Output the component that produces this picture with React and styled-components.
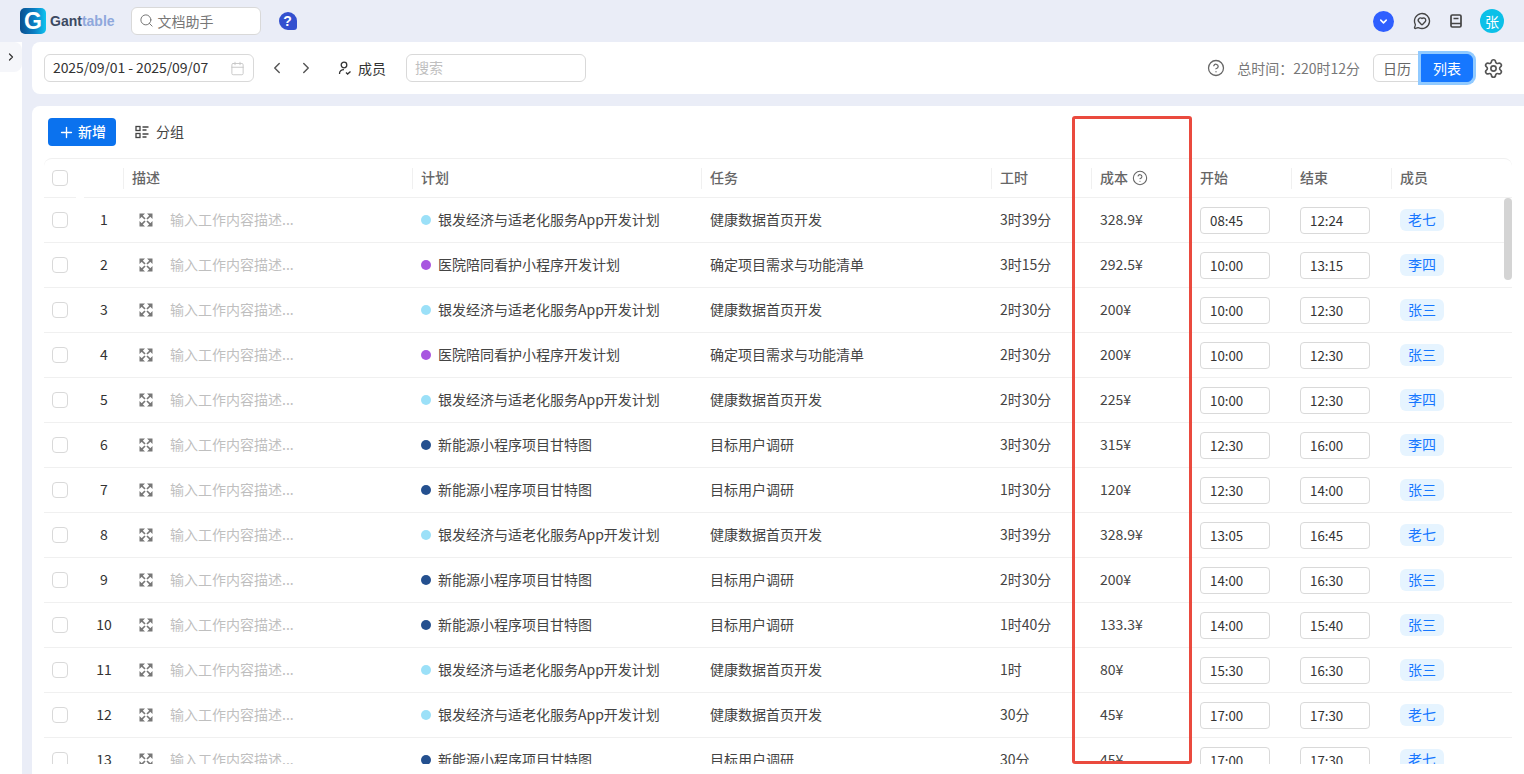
import React from "react";
import styled, { createGlobalStyle } from "styled-components";
import {
  Calendar,
  ChevronDown,
  ChevronLeft,
  ChevronRight,
  CircleHelp,
  MessageCircleHeart,
  Plus,
  Search,
  Settings,
} from "lucide-react";

const GlobalStyle = createGlobalStyle`
  html, body {
    margin: 0;
    height: 100%;
    overflow: hidden;
    background: #eaedf7;
    font-family: "Noto Sans CJK SC", "Noto Sans", sans-serif;
    font-size: 14px;
    color: #444;
  }
`;

const Page = styled.div`
  position: relative;
  width: 1524px;
  height: 774px;
  display: flex;
  flex-direction: column;
  overflow: hidden;
`;

const TopBar = styled.header`
  height: 42px;
  flex: none;
  display: flex;
  align-items: center;
  padding: 0 20px;
`;

const LogoMark = styled.div`
  width: 26px;
  height: 26px;
  border-radius: 5px;
  background: linear-gradient(90deg, #0a4f8f 0%, #0b7fc4 55%, #10c4f0 100%);
  color: #fff;
  font-family: "Liberation Sans", sans-serif;
  font-size: 23px;
  font-weight: 700;
  line-height: 27px;
  text-align: center;
`;

const LogoText = styled.div`
  margin-left: 4px;
  font-family: "Liberation Sans", sans-serif;
  font-size: 14px;
  font-weight: 700;
  color: #3c4a63;
  span {
    color: #8fa8dc;
  }
`;

const DocSearch = styled.div`
  margin-left: 16px;
  width: 130px;
  height: 28px;
  box-sizing: border-box;
  display: flex;
  align-items: center;
  gap: 4px;
  padding: 0 0 1px 7px;
  background: #fff;
  border: 1px solid #d9d9d9;
  border-radius: 6px;
  color: #777;
`;

const HelpBubble = styled.div`
  margin-left: 18px;
  width: 18px;
  height: 18px;
  border-radius: 50% 50% 3px 50%;
  background: #3350cf;
  color: #fff;
  font-family: "Liberation Sans", sans-serif;
  font-size: 14px;
  font-weight: 700;
  line-height: 18px;
  text-align: center;
`;

const TopActions = styled.div`
  margin-left: auto;
  display: flex;
  align-items: center;
  gap: 19px;
`;

const Round = styled.div`
  width: ${(p) => p.$size}px;
  height: ${(p) => p.$size}px;
  margin-left: ${(p) => p.$ml || 0}px;
  border-radius: 50%;
  background: ${(p) => p.$bg};
  color: #fff;
  display: flex;
  align-items: center;
  justify-content: center;
`;

const Body = styled.div`
  flex: 1;
  min-height: 0;
  display: flex;
`;

const Side = styled.aside`
  width: 22px;
  flex: none;
  background: #fff;
  margin-right: 10px;
`;

const SideToggle = styled.div`
  height: 30px;
  background: #f5f6fa;
  border-radius: 0 8px 8px 0;
  display: flex;
  align-items: center;
  justify-content: center;
  color: #333;
`;

const Main = styled.main`
  flex: 1;
  min-width: 0;
  display: flex;
  flex-direction: column;
  gap: 12px;
`;

const Toolbar = styled.section`
  height: 52px;
  flex: none;
  box-sizing: border-box;
  background: #fff;
  border-radius: 8px 0 0 8px;
  display: flex;
  align-items: center;
  padding: 0 20px 0 12px;
`;

const Field = styled.div`
  height: 28px;
  box-sizing: border-box;
  width: ${(p) => p.$w}px;
  margin-left: ${(p) => p.$ml || 0}px;
  display: flex;
  align-items: center;
  justify-content: space-between;
  padding: 0 8px 2px;
  border: 1px solid #d9d9d9;
  border-radius: 6px;
  letter-spacing: ${(p) => (p.$muted ? "0" : "-0.1px")};
  color: ${(p) => (p.$muted ? "#bfbfbf" : "#333")};
  svg {
    margin-top: 2px;
  }
`;

const IconBtn = styled.div`
  display: flex;
  align-items: center;
  margin-left: ${(p) => p.$ml || 0}px;
  color: #555;
`;

const MemberBtn = styled.div`
  margin-left: 23px;
  display: flex;
  align-items: center;
  gap: 6px;
  color: #333;
`;

const Total = styled.div`
  margin-left: auto;
  display: flex;
  align-items: center;
  gap: 12px;
  color: #777;
  svg {
    color: #666;
  }
`;

const Segments = styled.div`
  margin-left: 13px;
  display: flex;
`;

const Segment = styled.div`
  width: ${(p) => (p.$active ? 52 : 48)}px;
  height: 28px;
  box-sizing: border-box;
  display: flex;
  align-items: center;
  justify-content: center;
  padding-bottom: 1px;
  border: 1px solid ${(p) => (p.$active ? "#1677ff" : "#d9d9d9")};
  border-radius: ${(p) => (p.$active ? "0 6px 6px 0" : "6px 0 0 6px")};
  background: ${(p) => (p.$active ? "#1677ff" : "#fff")};
  color: ${(p) => (p.$active ? "#fff" : "#666")};
  box-shadow: ${(p) => (p.$active ? "0 0 0 3px #91caff" : "none")};
  position: relative;
`;

const GearBtn = styled.div`
  margin-left: 10px;
  display: flex;
  color: #555;
`;

const Card = styled.section`
  flex: 1;
  min-height: 0;
  background: #fff;
  border-radius: 8px 0 0 0;
  padding: 12px;
  padding-bottom: 10px;
  display: flex;
  flex-direction: column;
`;

const Actions = styled.div`
  height: 28px;
  flex: none;
  display: flex;
  align-items: center;
  margin: 0 0 12px 4px;
`;

const PrimaryBtn = styled.div`
  width: 68px;
  height: 28px;
  box-sizing: border-box;
  display: flex;
  align-items: center;
  justify-content: center;
  gap: 3px;
  padding-bottom: 2px;
  background: #0b72ee;
  border-radius: 4px;
  color: #fff;
  font-weight: 500;
  svg {
    margin-top: 2px;
  }
`;

const GroupBtn = styled.div`
  margin-left: 19px;
  display: flex;
  align-items: center;
  gap: 7px;
  padding-bottom: 2px;
  color: #444;
  svg {
    margin-top: 2px;
  }
`;

const TableWrap = styled.div`
  position: relative;
  flex: 1;
  min-height: 0;
  overflow: hidden;
  border-top: 1px solid #f0f0f0;
  border-radius: 8px 8px 0 0;
`;

const cols = "40px 40px 288px 289px 290px 100px 100px 100px 100px 121px";

const HeadRow = styled.div`
  display: grid;
  grid-template-columns: ${cols};
  height: 38px;
  align-items: center;
  border-bottom: 1px solid #f0f0f0;
`;

const HeadGap = styled.div`
  position: absolute;
  left: 32px;
  top: 0;
  width: 8px;
  height: 39px;
  background: #fff;
`;

const HeadCell = styled.div`
  height: 21px;
  display: flex;
  align-items: center;
  gap: 4px;
  margin-left: ${(p) => (p.$shift ? "-1px" : "0")};
  padding: 0 0 2px 8px;
  border-left: ${(p) => (p.$plain ? "none" : "1px solid #f0f0f0")};
  color: #666;
  font-weight: 500;
  box-sizing: border-box;
  svg {
    margin-top: 2px;
  }
`;

const Row = styled.div`
  display: grid;
  grid-template-columns: ${cols};
  height: 44px;
  align-items: center;
  border-bottom: 1px solid #f0f0f0;
`;

const Cell = styled.div`
  padding: 0 0 2px 9px;
  white-space: nowrap;
`;

const CheckCell = styled.div`
  padding-left: 8px;
  display: flex;
  align-items: center;
`;

const Check = styled.div`
  width: 16px;
  height: 16px;
  box-sizing: border-box;
  border: 1px solid #d9d9d9;
  border-radius: 4px;
  background: #fff;
`;

const IndexCell = styled.div`
  text-align: center;
  padding-bottom: 2px;
  color: #333;
`;

const DescCell = styled.div`
  display: flex;
  align-items: center;
  gap: 17px;
  padding: 0 0 2px 15px;
  color: #bfbfbf;
  line-height: 18px;
  svg {
    flex: none;
    margin-top: 2px;
  }
`;

const PlanCell = styled.div`
  display: flex;
  align-items: center;
  gap: 7px;
  padding: 0 0 2px 9px;
  white-space: nowrap;
`;

const Dot = styled.span`
  width: 10px;
  height: 10px;
  border-radius: 50%;
  background: ${(p) => p.$color};
  margin-top: 2px;
`;

const TimeBox = styled.div`
  margin: 1px 0 0 9px;
  width: 70px;
  height: 27px;
  box-sizing: border-box;
  display: flex;
  align-items: center;
  padding: 0 0 1px 9px;
  border: 1px solid #d9d9d9;
  border-radius: 4px;
  font-size: 13.3px;
  color: #333;
`;

const Tag = styled.span`
  margin-left: 9px;
  width: 44px;
  height: 22px;
  box-sizing: border-box;
  display: inline-flex;
  align-items: center;
  justify-content: center;
  padding-bottom: 2px;
  background: #e6f4ff;
  border-radius: 6px;
  color: #1677ff;
`;

const ScrollThumb = styled.div`
  position: absolute;
  right: 0;
  top: 39px;
  width: 8px;
  height: 82px;
  border-radius: 4px;
  background: #d4d4d4;
`;

const Marker = styled.div`
  position: absolute;
  left: 1072px;
  top: 116px;
  width: 120px;
  height: 648px;
  box-sizing: border-box;
  border: 3px solid #ea4a3e;
  border-radius: 3px;
  pointer-events: none;
`;

const PLANS = {
  silver: { name: "银发经济与适老化服务App开发计划", color: "#9be0f8", task: "健康数据首页开发" },
  care: { name: "医院陪同看护小程序开发计划", color: "#a855e0", task: "确定项目需求与功能清单" },
  energy: { name: "新能源小程序项目甘特图", color: "#24508f", task: "目标用户调研" },
};

const rows = [
  ["silver", "3时39分", "328.9¥", "08:45", "12:24", "老七"],
  ["care", "3时15分", "292.5¥", "10:00", "13:15", "李四"],
  ["silver", "2时30分", "200¥", "10:00", "12:30", "张三"],
  ["care", "2时30分", "200¥", "10:00", "12:30", "张三"],
  ["silver", "2时30分", "225¥", "10:00", "12:30", "李四"],
  ["energy", "3时30分", "315¥", "12:30", "16:00", "李四"],
  ["energy", "1时30分", "120¥", "12:30", "14:00", "张三"],
  ["silver", "3时39分", "328.9¥", "13:05", "16:45", "老七"],
  ["energy", "2时30分", "200¥", "14:00", "16:30", "张三"],
  ["energy", "1时40分", "133.3¥", "14:00", "15:40", "张三"],
  ["silver", "1时", "80¥", "15:30", "16:30", "张三"],
  ["silver", "30分", "45¥", "17:00", "17:30", "老七"],
  ["energy", "30分", "45¥", "17:00", "17:30", "老七"],
];

const ExpandIcon = () => (
  <svg width="14" height="14" viewBox="0 0 14 14" fill="#777" stroke="#777" strokeWidth="1.7">
    <path d="M.5.5h5.5L.5 6zM13.5.5H8l5.5 5.5zM.5 13.5H6L.5 8zM13.5 13.5H8L13.5 8z" strokeWidth="0" />
    <path d="M2.5 2.5 6 6M11.5 2.5 8 6M2.5 11.5 6 8M11.5 11.5 8 8" />
  </svg>
);

const GroupIcon = () => (
  <svg width="14" height="14" viewBox="0 0 14 14" fill="none" stroke="#444" strokeWidth="1.3">
    <rect x="1" y="1.5" width="4" height="4" />
    <rect x="1" y="8.5" width="4" height="4" />
    <path d="M7.5 2h6M7.5 5h4M7.5 9h6M7.5 12h4" />
  </svg>
);

const MemberIcon = () => (
  <svg width="14" height="15" viewBox="0 0 14 15" fill="none" stroke="#333" strokeWidth="1.3">
    <circle cx="6" cy="4" r="2.8" />
    <path d="M1.5 13c0-2.8 1.8-4.4 4.5-4.4M8 11.5l1.6 1.5 2.9-2.6" />
  </svg>
);

const BookIcon = () => (
  <svg width="12" height="14" viewBox="0 0 12 14" fill="none" stroke="#444" strokeWidth="1.7">
    <rect x="1" y="1" width="10" height="12" rx="1.3" />
    <path d="M1 9.5h10M3.5 4.5h5" />
  </svg>
);

export default function App() {
  return (
    <Page>
      <GlobalStyle />
      <TopBar>
        <LogoMark>G</LogoMark>
        <LogoText>
          Gant<span>table</span>
        </LogoText>
        <DocSearch>
          <Search size={15} strokeWidth={1.6} />
          文档助手
        </DocSearch>
        <HelpBubble>?</HelpBubble>
        <TopActions>
          <Round $size={21} $bg="#2f5fff">
            <ChevronDown size={11} strokeWidth={3.4} />
          </Round>
          <MessageCircleHeart size={18} color="#444" strokeWidth={1.8} />
          <BookIcon />
          <Round $size={24} $ml={-1} $bg="#0cc0e8">
            张
          </Round>
        </TopActions>
      </TopBar>
      <Body>
        <Side>
          <SideToggle>
            <ChevronRight size={12} strokeWidth={2.4} />
          </SideToggle>
        </Side>
        <Main>
          <Toolbar>
            <Field $w={210}>
              2025/09/01 - 2025/09/07
              <Calendar size={15} color="#c4c4c4" strokeWidth={1.4} />
            </Field>
            <IconBtn $ml={14}>
              <ChevronLeft size={18} strokeWidth={1.9} />
            </IconBtn>
            <IconBtn $ml={11}>
              <ChevronRight size={18} strokeWidth={1.9} />
            </IconBtn>
            <MemberBtn>
              <MemberIcon />
              成员
            </MemberBtn>
            <Field $w={180} $ml={20} $muted>
              搜索
            </Field>
            <Total>
              <CircleHelp size={18} strokeWidth={1.7} />
              总时间：220时12分
            </Total>
            <Segments>
              <Segment>日历</Segment>
              <Segment $active>列表</Segment>
            </Segments>
            <GearBtn>
              <Settings size={21} strokeWidth={1.9} />
            </GearBtn>
          </Toolbar>
          <Card>
            <Actions>
              <PrimaryBtn>
                <Plus size={17} strokeWidth={1.9} />
                新增
              </PrimaryBtn>
              <GroupBtn>
                <GroupIcon />
                分组
              </GroupBtn>
            </Actions>
            <TableWrap>
              <HeadRow>
                <CheckCell>
                  <Check />
                </CheckCell>
                <HeadCell $plain />
                <HeadCell $shift>描述</HeadCell>
                <HeadCell>计划</HeadCell>
                <HeadCell>任务</HeadCell>
                <HeadCell>工时</HeadCell>
                <HeadCell>
                  成本
                  <CircleHelp size={16} strokeWidth={1.6} />
                </HeadCell>
                <HeadCell>开始</HeadCell>
                <HeadCell>结束</HeadCell>
                <HeadCell>成员</HeadCell>
              </HeadRow>
              <HeadGap />
              {rows.map(([plan, hours, cost, start, end, member], i) => (
                <Row key={i}>
                  <CheckCell>
                    <Check />
                  </CheckCell>
                  <IndexCell>{i + 1}</IndexCell>
                  <DescCell>
                    <ExpandIcon />
                    <span>输入工作内容描述...</span>
                  </DescCell>
                  <PlanCell>
                    <Dot $color={PLANS[plan].color} />
                    {PLANS[plan].name}
                  </PlanCell>
                  <Cell>{PLANS[plan].task}</Cell>
                  <Cell>{hours}</Cell>
                  <Cell>{cost}</Cell>
                  <TimeBox>{start}</TimeBox>
                  <TimeBox>{end}</TimeBox>
                  <div>
                    <Tag>{member}</Tag>
                  </div>
                </Row>
              ))}
              <ScrollThumb />
            </TableWrap>
          </Card>
        </Main>
      </Body>
      <Marker />
    </Page>
  );
}
